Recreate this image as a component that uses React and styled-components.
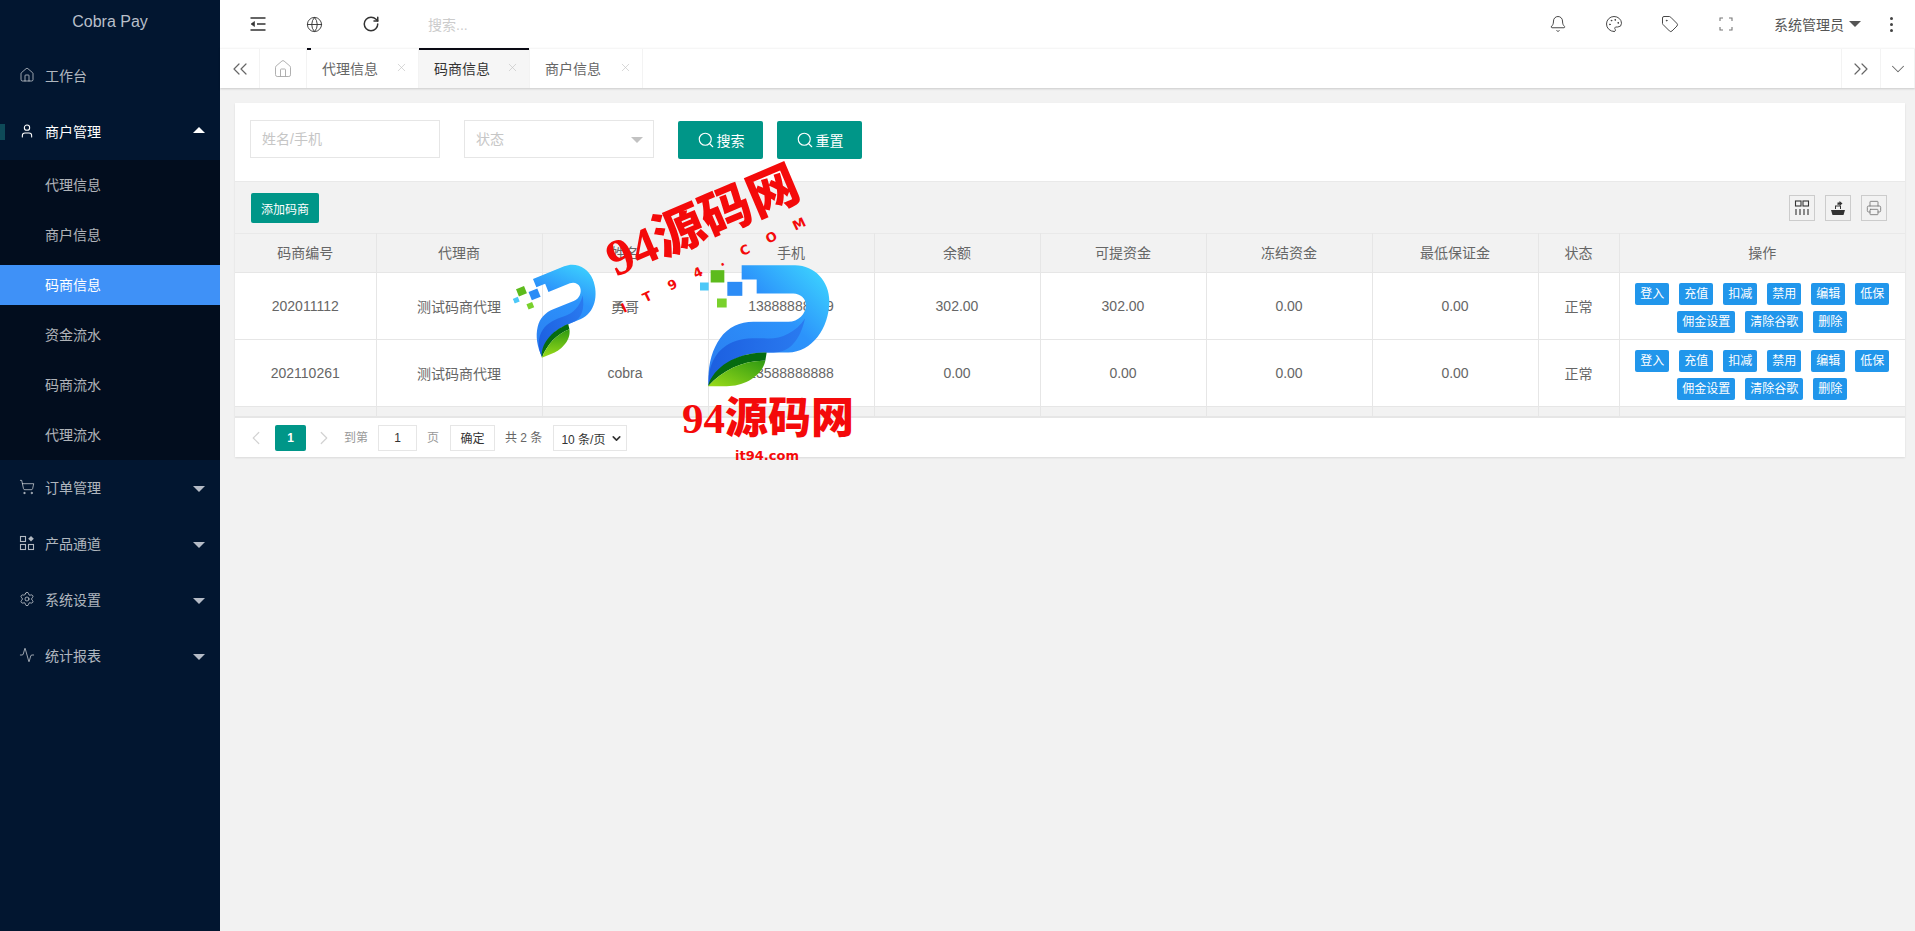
import React from "react";
import styled, { createGlobalStyle } from "styled-components";
import {
	Home,
	User,
	ShoppingCart,
	Settings,
	Activity,
	Globe,
	RotateCw,
	Bell,
	Palette,
	Tag,
	ChevronsLeft,
	ChevronsRight,
	ChevronDown,
	ChevronLeft,
	ChevronRight,
	X,
	Search,
	Printer,
} from "lucide-react";

const GlobalStyle = createGlobalStyle`
	html, body {
		margin: 0;
		padding: 0;
		height: 100%;
		background: #f2f2f2;
		overflow: hidden;
		font-family: "Liberation Sans", "Noto Sans CJK SC", sans-serif;
		font-size: 14px;
		color: #666;
	}
	* { box-sizing: border-box; }
`;

const Page = styled.div`
	position: relative;
	display: flex;
	width: 1915px;
	height: 931px;
	overflow: hidden;
`;

const Sidebar = styled.aside`
	width: 220px;
	flex: none;
	background: #021630;
	color: rgba(255, 255, 255, 0.7);
`;
const Logo = styled.div`
	height: 48px;
	padding-bottom: 4px;
	display: flex;
	align-items: center;
	justify-content: center;
	font-size: 16px;
	color: #b8bfc9;
`;
const MenuItem = styled.div`
	position: relative;
	height: 56px;
	display: flex;
	align-items: center;
	padding: 0 0 2px 19px;
	color: ${(p) => (p.$open ? "#fff" : "rgba(255,255,255,.7)")};
	svg {
		flex: none;
		margin-right: 10px;
	}
`;
const OpenMark = styled.i`
	position: absolute;
	left: 0;
	top: 20px;
	width: 5px;
	height: 16px;
	background: #0e4a58;
`;
const Caret = styled.i`
	position: absolute;
	right: 15px;
	top: ${(p) => (p.$up ? "23px" : "26px")};
	width: 0;
	height: 0;
	border-left: 6px solid transparent;
	border-right: 6px solid transparent;
	border-bottom: ${(p) => (p.$up ? "6px solid #fff" : "none")};
	border-top: ${(p) => (p.$up ? "none" : "6px solid #b5bbc6")};
`;
const SubMenu = styled.div`
	display: flex;
	flex-direction: column;
	gap: 10px;
	padding: 5px 0;
	background: #020d1e;
`;
const SubItem = styled.div`
	height: 40px;
	padding: 0 0 2px 45px;
	display: flex;
	align-items: center;
	color: ${(p) => (p.$active ? "#fff" : "rgba(255,255,255,.7)")};
	background: ${(p) => (p.$active ? "#3f91f7" : "transparent")};
`;

const Main = styled.main`
	flex: 1;
	min-width: 0;
	display: flex;
	flex-direction: column;
`;
const Header = styled.header`
	height: 48px;
	background: #fff;
	display: flex;
	align-items: center;
`;
const HeadLeft = styled.div`
	display: flex;
	align-items: center;
	padding-left: 29px;
	gap: 39px;
	color: #333;
`;
const HeadSearch = styled.div`
	margin-left: 48px;
	color: #ccc;
	font-size: 14px;
`;
const HeadRight = styled.div`
	margin-left: auto;
	display: flex;
	align-items: center;
	color: #444;
`;
const HeadIcon = styled.span`
	width: 56px;
	display: flex;
	justify-content: center;
	svg {
		display: block;
	}
`;
const UserName = styled.span`
	margin-left: 20px;
	color: #555;
`;
const UserCaret = styled.i`
	margin-left: 5px;
	width: 0;
	height: 0;
	border-left: 6px solid transparent;
	border-right: 6px solid transparent;
	border-top: 6px solid #555;
`;
const Dots = styled.span`
	margin: 0 22px 0 29px;
	display: flex;
	flex-direction: column;
	gap: 3px;
	i {
		width: 3px;
		height: 3px;
		background: #444;
		border-radius: 50%;
	}
`;

const TabBar = styled.nav`
	position: relative;
	height: 40px;
	background: #fff;
	display: flex;
	box-shadow: 0 1px 2px rgba(0, 0, 0, 0.16);
	border-top: 1px solid #f6f6f6;
`;
const TabSide = styled.div`
	width: ${(p) => p.$w}px;
	flex: none;
	display: flex;
	align-items: center;
	justify-content: center;
	color: ${(p) => p.$color || "#666"};
	border-right: 1px solid #f3f3f3;
	border-left: ${(p) => (p.$left ? "1px solid #f3f3f3" : "none")};
`;
const TabFill = styled.div`
	flex: 1;
`;
const Tab = styled.div`
	position: relative;
	width: ${(p) => p.$w}px;
	flex: none;
	display: flex;
	align-items: center;
	padding: 0 0 2px 15px;
	color: ${(p) => (p.$active ? "#333" : "#666")};
	background: ${(p) => (p.$active ? "#f6f6f6" : "#fff")};
	border-right: 1px solid #f3f3f3;
	svg {
		position: absolute;
		right: 10px;
		top: 12px;
		color: #c2c2c2;
	}
	&::before {
		content: "";
		position: absolute;
		left: 0;
		top: -1px;
		height: 2px;
		width: ${(p) => (p.$active ? "100%" : p.$dash ? "4px" : "0")};
		background: #0a0a14;
	}
`;

const Content = styled.div`
	flex: 1;
	padding: 15px 10px 0 15px;
`;
const Card = styled.section`
	background: #fff;
	box-shadow: 0 1px 2px rgba(0, 0, 0, 0.1);
`;
const FilterForm = styled.div`
	height: 78px;
	padding: 17px 0 0 15px;
	display: flex;
	align-items: flex-start;
`;
const Field = styled.div`
	position: relative;
	width: 190px;
	height: 38px;
	margin-right: ${(p) => p.$mr}px;
	padding-left: 11px;
	line-height: 36px;
	color: #c6c6c6;
	border: 1px solid #e6e6e6;
`;
const SelectCaret = styled.i`
	position: absolute;
	right: 10px;
	top: 16px;
	width: 0;
	height: 0;
	border-left: 6px solid transparent;
	border-right: 6px solid transparent;
	border-top: 6px solid #c2c2c2;
`;
const SearchBtn = styled.button`
	width: 85px;
	height: 38px;
	margin: 1px 14px 0 0;
	padding: 0;
	border: 0;
	border-radius: 2px;
	display: flex;
	align-items: center;
	justify-content: center;
	gap: 2px;
	background: #009688;
	color: #fff;
	font: inherit;
`;

const TableWrap = styled.div`
	background: #f2f2f2;
	border-top: 1px solid #e9e9e9;
`;
const ToolBar = styled.div`
	height: 51px;
	padding: 11px 18px 0 16px;
	display: flex;
	align-items: flex-start;
`;
const AddBtn = styled.button`
	width: 68px;
	height: 30px;
	padding: 0;
	border: 0;
	border-radius: 2px;
	background: #009688;
	color: #fff;
	font: inherit;
	font-size: 12px;
`;
const ToolIcons = styled.div`
	margin-left: auto;
	margin-top: 2px;
	display: flex;
	gap: 10px;
`;
const ToolIcon = styled.span`
	width: 26px;
	height: 26px;
	display: flex;
	align-items: center;
	justify-content: center;
	border: 1px solid #ccc;
	color: ${(p) => p.$color || "#333"};
`;
const Table = styled.table`
	width: 100%;
	table-layout: fixed;
	border-collapse: collapse;
	background: #fff;
	th,
	td {
		padding: 0;
		border: 1px solid #e6e6e6;
		text-align: center;
		color: #666;
		font-weight: 400;
		font-size: 14px;
	}
	th {
		padding-bottom: 2px;
	}
	tr:first-child > * {
		border-top: 1px solid #e9e9e9;
	}
	th:first-child,
	td:first-child {
		border-left: 0;
	}
	th:last-child,
	td:last-child {
		border-right: 0;
	}
	thead tr {
		height: 39px;
		background: #f2f2f2;
	}
	tbody tr {
		height: 67px;
	}
	tbody tr.strip {
		height: 10px;
		background: #f2f2f2;
	}
`;
const Actions = styled.div`
	display: flex;
	flex-wrap: wrap;
	justify-content: center;
	gap: 6px 10px;
	padding: 4px 10px 0;
`;
const ActionBtn = styled.span`
	height: 22px;
	padding: 0 5px;
	line-height: 22px;
	border-radius: 2px;
	background: #2196eb;
	color: #fff;
	font-size: 12px;
`;
const Pager = styled.div`
	height: 40px;
	padding: 7px 0 0 15px;
	display: flex;
	align-items: flex-start;
	background: #fff;
	border-top: 1px solid #e6e6e6;
	font-size: 12px;
	color: #666;
`;
const PageArrow = styled.span`
	width: 12px;
	height: 26px;
	margin: 0 ${(p) => p.$mr}px 0 ${(p) => p.$ml}px;
	display: flex;
	align-items: center;
	justify-content: center;
	color: #d2d2d2;
	svg {
		flex: none;
	}
`;
const PageNum = styled.span`
	width: 31px;
	height: 26px;
	line-height: 26px;
	text-align: center;
	background: #009688;
	color: #fff;
	border-radius: 2px;
	font-weight: 700;
`;
const PageText = styled.span`
	height: 26px;
	line-height: 26px;
	margin: 0 ${(p) => p.$mr}px 0 ${(p) => p.$ml}px;
	color: ${(p) => p.$color || "#666"};
`;
const PageInput = styled.span`
	width: 39px;
	height: 26px;
	line-height: 24px;
	text-align: center;
	color: #333;
	border: 1px solid #e6e6e6;
`;
const PageGo = styled.span`
	width: 45px;
	height: 26px;
	line-height: 26px;
	text-align: center;
	color: #333;
	border: 1px solid #e6e6e6;
`;
const PageSelect = styled.span`
	width: 74px;
	height: 26px;
	padding-left: 7px;
	display: flex;
	align-items: center;
	gap: 5px;
	color: #333;
	border: 1px solid #e6e6e6;
`;

const Mark = styled.span`
	position: absolute;
	left: ${(p) => p.$x}px;
	top: ${(p) => p.$y}px;
	transform: translate(-50%, -50%) rotate(${(p) => p.$r || 0}deg);
	white-space: nowrap;
	color: #f40a0a;
	font-family: ${(p) => (p.$sans ? '"DejaVu Sans", sans-serif' : '"Liberation Serif", "Noto Sans CJK SC", serif')};
	font-weight: 900;
	font-size: ${(p) => p.$size}px;
	letter-spacing: ${(p) => p.$ls || 0}px;
	line-height: 1;
`;
const LogoMark = styled.svg`
	position: absolute;
	left: ${(p) => p.$x}px;
	top: ${(p) => p.$y}px;
	width: ${(p) => p.$w}px;
	height: ${(p) => p.$h}px;
	transform: rotate(${(p) => p.$r || 0}deg);
`;

function MenuIndent() {
	return (
		<svg width="18" height="18" viewBox="0 0 18 18" fill="none" stroke="#333" strokeWidth="1.6">
			<path d="M1.5 3h15M8 9h8.5M1.5 15h15" />
			<path d="M5.500 6.500 2 9l3.500 2.500z" fill="#333" strokeWidth="0.6" />
		</svg>
	);
}

function Expand() {
	return (
		<svg width="14" height="14" viewBox="0 0 14 14" fill="none" stroke="#777" strokeWidth="1.1">
			<path d="M1 4V1h3M10 1h3v3M13 10v3h-3M4 13H1v-3" />
		</svg>
	);
}

function GridPlus() {
	return (
		<svg width="16" height="16" viewBox="0 0 16 16" fill="none" stroke="currentColor" strokeWidth="1.1">
			<rect x="1.500" y="1.500" width="5" height="5" />
			<rect x="1.500" y="9.500" width="5" height="5" />
			<rect x="9.500" y="9.500" width="5" height="5" />
			<path d="m12 1 2.800 2.800L12 6.600 9.200 3.800z" fill="currentColor" stroke="none" />
		</svg>
	);
}

function Cols() {
	return (
		<svg width="16" height="16" viewBox="0 0 16 16" fill="none" stroke="#333" strokeWidth="1.1">
			<rect x="1.500" y="1" width="5.500" height="5" />
			<rect x="9" y="1" width="5.500" height="5" />
			<path d="M2 9v6M6 9v6M10 9v6M14 9v6" />
		</svg>
	);
}

function ExportShip() {
	return (
		<svg width="16" height="16" viewBox="0 0 16 16" fill="#333">
			<path d="M1 10h14l-1.500 5h-11z" />
			<path d="M5 9V5.500h6V9h-1V6.500H6V9z" />
			<path d="M7.500 5V2.500h2V1l3 2.500L9.500 6V4.500h-1V5z" />
		</svg>
	);
}

function BrandLogo({ x, y, w, h, r, id }) {
	return (
		<LogoMark $x={x} $y={y} $w={w} $h={h} $r={r} viewBox="660 345 390 365">
			<defs>
				<linearGradient id={`${id}a`} x1="0" y1="1" x2="1" y2="0">
					<stop offset="0" stopColor="#2b7cf0" />
					<stop offset="0.6" stopColor="#2c93fb" />
					<stop offset="1" stopColor="#3fdcff" />
				</linearGradient>
				<linearGradient id={`${id}b`} x1="0" y1="0" x2="1" y2="0">
					<stop offset="0" stopColor="#1c5fe0" />
					<stop offset="1" stopColor="#2a7bf0" />
				</linearGradient>
				<linearGradient id={`${id}c`} x1="0" y1="1" x2="1" y2="0">
					<stop offset="0" stopColor="#9bdc1a" />
					<stop offset="1" stopColor="#2f9a12" />
				</linearGradient>
			</defs>
			<path
				fill={`url(#${id}a)`}
				d="M785 345H945C1005 345 1048 395 1048 452C1048 535 995 607 925 607H850C780 607 720 640 686 706C682 650 695 600 720 565C745 530 780 515 820 515H925C955 515 978 490 978 465C978 445 960 430 940 430H830V388H785Z"
			/>
			<path
				fill={`url(#${id}b)`}
				d="M686 706C682 660 700 610 740 585C770 565 810 562 860 565C900 567 945 550 975 505C960 570 930 607 880 607H850C780 607 720 640 686 706Z"
			/>
			<path fill="#056b10" d="M684 708C700 650 770 606 860 607L856 632C790 630 730 660 684 708Z" />
			<path fill={`url(#${id}c)`} d="M684 708C730 660 790 630 856 632C845 680 790 708 740 708Z" />
			<rect x="692" y="360" width="41" height="37" fill="#5dbb1c" />
			<rect x="742" y="395" width="45" height="42" fill="#2c8cf6" />
			<rect x="711" y="445" width="29" height="27" fill="#79d12c" />
			<rect x="660" y="397" width="26" height="24" fill="#4cc8f8" />
		</LogoMark>
	);
}

const subItems = ["代理信息", "商户信息", "码商信息", "资金流水", "码商流水", "代理流水"];
const lowerMenu = [
	{ label: "订单管理", icon: <ShoppingCart size={16} strokeWidth={1.3} /> },
	{ label: "产品通道", icon: <GridPlus /> },
	{ label: "系统设置", icon: <Settings size={16} strokeWidth={1.3} /> },
	{ label: "统计报表", icon: <Activity size={16} strokeWidth={1.3} /> },
];
const tabs = [
	{ label: "代理信息", w: 112, dash: true },
	{ label: "码商信息", w: 111, active: true },
	{ label: "商户信息", w: 113 },
];
const columns = ["码商编号", "代理商", "姓名", "手机", "余额", "可提资金", "冻结资金", "最低保证金", "状态", "操作"];
const widths = [141, 166, 166, 166, 166, 166, 166, 166, 81, 286];
const rows = [
	["202011112", "测试码商代理", "勇哥", "13888888889", "302.00", "302.00", "0.00", "0.00", "正常"],
	["202110261", "测试码商代理", "cobra", "13588888888", "0.00", "0.00", "0.00", "0.00", "正常"],
];
const actions = ["登入", "充值", "扣减", "禁用", "编辑", "低保", "佣金设置", "清除谷歌", "删除"];

export default function App() {
	return (
		<Page>
			<GlobalStyle />
			<Sidebar>
				<Logo>Cobra Pay</Logo>
				<MenuItem>
					<Home size={16} strokeWidth={1.3} />
					工作台
				</MenuItem>
				<MenuItem $open>
					<OpenMark />
					<User size={16} strokeWidth={1.6} />
					商户管理
					<Caret $up />
				</MenuItem>
				<SubMenu>
					{subItems.map((s) => (
						<SubItem key={s} $active={s === "码商信息"}>
							{s}
						</SubItem>
					))}
				</SubMenu>
				{lowerMenu.map((m) => (
					<MenuItem key={m.label}>
						{m.icon}
						{m.label}
						<Caret />
					</MenuItem>
				))}
			</Sidebar>
			<Main>
				<Header>
					<HeadLeft>
						<MenuIndent />
						<Globe size={17} strokeWidth={1.3} />
						<RotateCw size={18} strokeWidth={2} />
					</HeadLeft>
					<HeadSearch>搜索...</HeadSearch>
					<HeadRight>
						<HeadIcon>
							<Bell size={18} strokeWidth={1.3} />
						</HeadIcon>
						<HeadIcon>
							<Palette size={18} strokeWidth={1.3} />
						</HeadIcon>
						<HeadIcon>
							<Tag size={18} strokeWidth={1.3} />
						</HeadIcon>
						<HeadIcon>
							<Expand />
						</HeadIcon>
						<UserName>系统管理员</UserName>
						<UserCaret />
						<Dots>
							<i />
							<i />
							<i />
						</Dots>
					</HeadRight>
				</Header>
				<TabBar>
					<TabSide $w={40}>
						<ChevronsLeft size={24} strokeWidth={1.2} />
					</TabSide>
					<TabSide $w={47} $color="#a8a8a8">
						<Home size={20} strokeWidth={1.1} />
					</TabSide>
					{tabs.map((t) => (
						<Tab key={t.label} $w={t.w} $active={t.active} $dash={t.dash}>
							{t.label}
							<X size={13} strokeWidth={1.2} />
						</Tab>
					))}
					<TabFill />
					<TabSide $w={40} $left>
						<ChevronsRight size={24} strokeWidth={1.2} />
					</TabSide>
					<TabSide $w={34}>
						<ChevronDown size={22} strokeWidth={1.1} />
					</TabSide>
				</TabBar>
				<Content>
					<Card>
						<FilterForm>
							<Field $mr={24}>姓名/手机</Field>
							<Field $mr={24}>
								状态
								<SelectCaret />
							</Field>
							<SearchBtn>
								<Search size={18} strokeWidth={1.5} />
								搜索
							</SearchBtn>
							<SearchBtn>
								<Search size={18} strokeWidth={1.5} />
								重置
							</SearchBtn>
						</FilterForm>
						<TableWrap>
							<ToolBar>
								<AddBtn>添加码商</AddBtn>
								<ToolIcons>
									<ToolIcon>
										<Cols />
									</ToolIcon>
									<ToolIcon>
										<ExportShip />
									</ToolIcon>
									<ToolIcon $color="#777">
										<Printer size={16} strokeWidth={1.3} />
									</ToolIcon>
								</ToolIcons>
							</ToolBar>
							<Table>
								<colgroup>
									{widths.map((w, i) => (
										<col key={i} width={w} />
									))}
								</colgroup>
								<thead>
									<tr>
										{columns.map((c) => (
											<th key={c}>{c}</th>
										))}
									</tr>
								</thead>
								<tbody>
									{rows.map((r) => (
										<tr key={r[0]}>
											{r.map((v, i) => (
												<td key={i}>{v}</td>
											))}
											<td>
												<Actions>
													{actions.map((a) => (
														<ActionBtn key={a}>{a}</ActionBtn>
													))}
												</Actions>
											</td>
										</tr>
									))}
									<tr className="strip">
										{columns.map((c) => (
											<td key={c} />
										))}
									</tr>
								</tbody>
							</Table>
						</TableWrap>
						<Pager>
							<PageArrow $ml={0} $mr={13}>
								<ChevronLeft size={22} strokeWidth={1.3} />
							</PageArrow>
							<PageNum>1</PageNum>
							<PageArrow $ml={12} $mr={14}>
								<ChevronRight size={22} strokeWidth={1.3} />
							</PageArrow>
							<PageText $ml={0} $mr={10} $color="#999">
								到第
							</PageText>
							<PageInput>1</PageInput>
							<PageText $ml={10} $mr={11} $color="#999">
								页
							</PageText>
							<PageGo>确定</PageGo>
							<PageText $ml={10} $mr={11}>
								共 2 条
							</PageText>
							<PageSelect>
								10 条/页
								<ChevronDown size={13} strokeWidth={3} />
							</PageSelect>
						</Pager>
					</Card>
				</Content>
			</Main>
			<BrandLogo id="lg" x={700} y={265} w={130} h={122} />
			<BrandLogo id="sm" x={520} y={270} w={82} h={78} r={-22} />
			<Mark $x={703} $y={222} $r={-23} $size={51}>
				94源码网
			</Mark>
			<Mark $x={722} $y={261} $r={-25.6} $size={13} $ls={19} $sans>
				IT94.COM
			</Mark>
			<Mark $x={768} $y={418} $size={43}>
				94源码网
			</Mark>
			<Mark $x={767} $y={455} $size={13} $sans>
				it94.com
			</Mark>
		</Page>
	);
}
